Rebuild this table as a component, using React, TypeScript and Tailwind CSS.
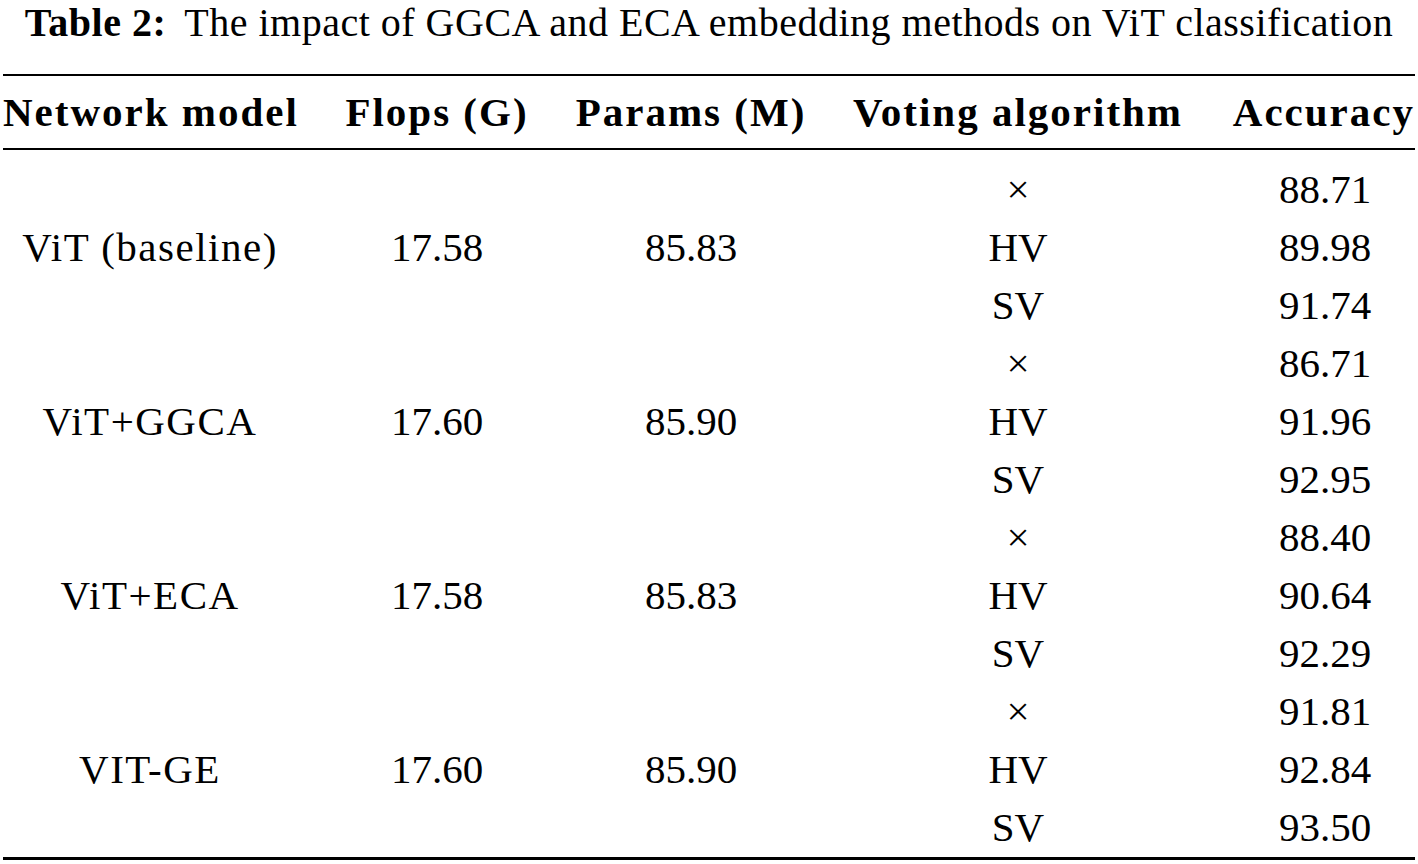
const groups = [
  { model: "ViT (baseline)", flops: "17.58", params: "85.83", acc: ["88.71", "89.98", "91.74"] },
  { model: "ViT+GGCA", flops: "17.60", params: "85.90", acc: ["86.71", "91.96", "92.95"] },
  { model: "ViT+ECA", flops: "17.58", params: "85.83", acc: ["88.40", "90.64", "92.29"] },
  { model: "VIT-GE", flops: "17.60", params: "85.90", acc: ["91.81", "92.84", "93.50"] },
];

const votes = ["×", "HV", "SV"];

const cols = "grid grid-cols-[300px_274px_234px_420px_190px]";

export default function App() {
  return (
    <div className="w-[1418px] h-[864px] bg-white text-black font-['Liberation_Serif','DejaVu_Serif',serif]">
      <div className="h-[74px] text-center text-[40px] leading-[45px] tracking-[0.5px]">
        <span className="font-bold">Table 2:</span>
        <span className="ml-[18px]">The impact of GGCA and ECA embedding methods on ViT classification</span>
      </div>

      <div className="mx-[3px] h-[2px] bg-black" />
      <div className={`${cols} h-[72px] items-center text-center text-[41px] font-bold leading-none tracking-[2px]`}>
        <div className="text-left pl-[3px]">Network model</div>
        <div>Flops (G)</div>
        <div>Params (M)</div>
        <div>Voting algorithm</div>
        <div className="text-right pr-[3px]">Accuracy</div>
      </div>
      <div className="mx-[3px] h-[2px] bg-black" />

      <div className={`${cols} auto-rows-[58px] pt-[10px] text-[41px] leading-none text-center`}>
        {groups.map((g) => (
          <>
            <div key={g.model + "m"} className="row-span-3 flex items-center justify-center tracking-[1.5px]">{g.model}</div>
            <div key={g.model + "f"} className="row-span-3 flex items-center justify-center">{g.flops}</div>
            <div key={g.model + "p"} className="row-span-3 flex items-center justify-center">{g.params}</div>
            {g.acc.map((a, i) => (
              <>
                <div key={g.model + "v" + i} className="flex items-center justify-center">{votes[i]}</div>
                <div key={g.model + "a" + i} className="flex items-center justify-center pl-[4px]">{a}</div>
              </>
            ))}
          </>
        ))}
      </div>
      <div className="mx-[3px] h-[3px] bg-black mt-[1px]" />
    </div>
  );
}
